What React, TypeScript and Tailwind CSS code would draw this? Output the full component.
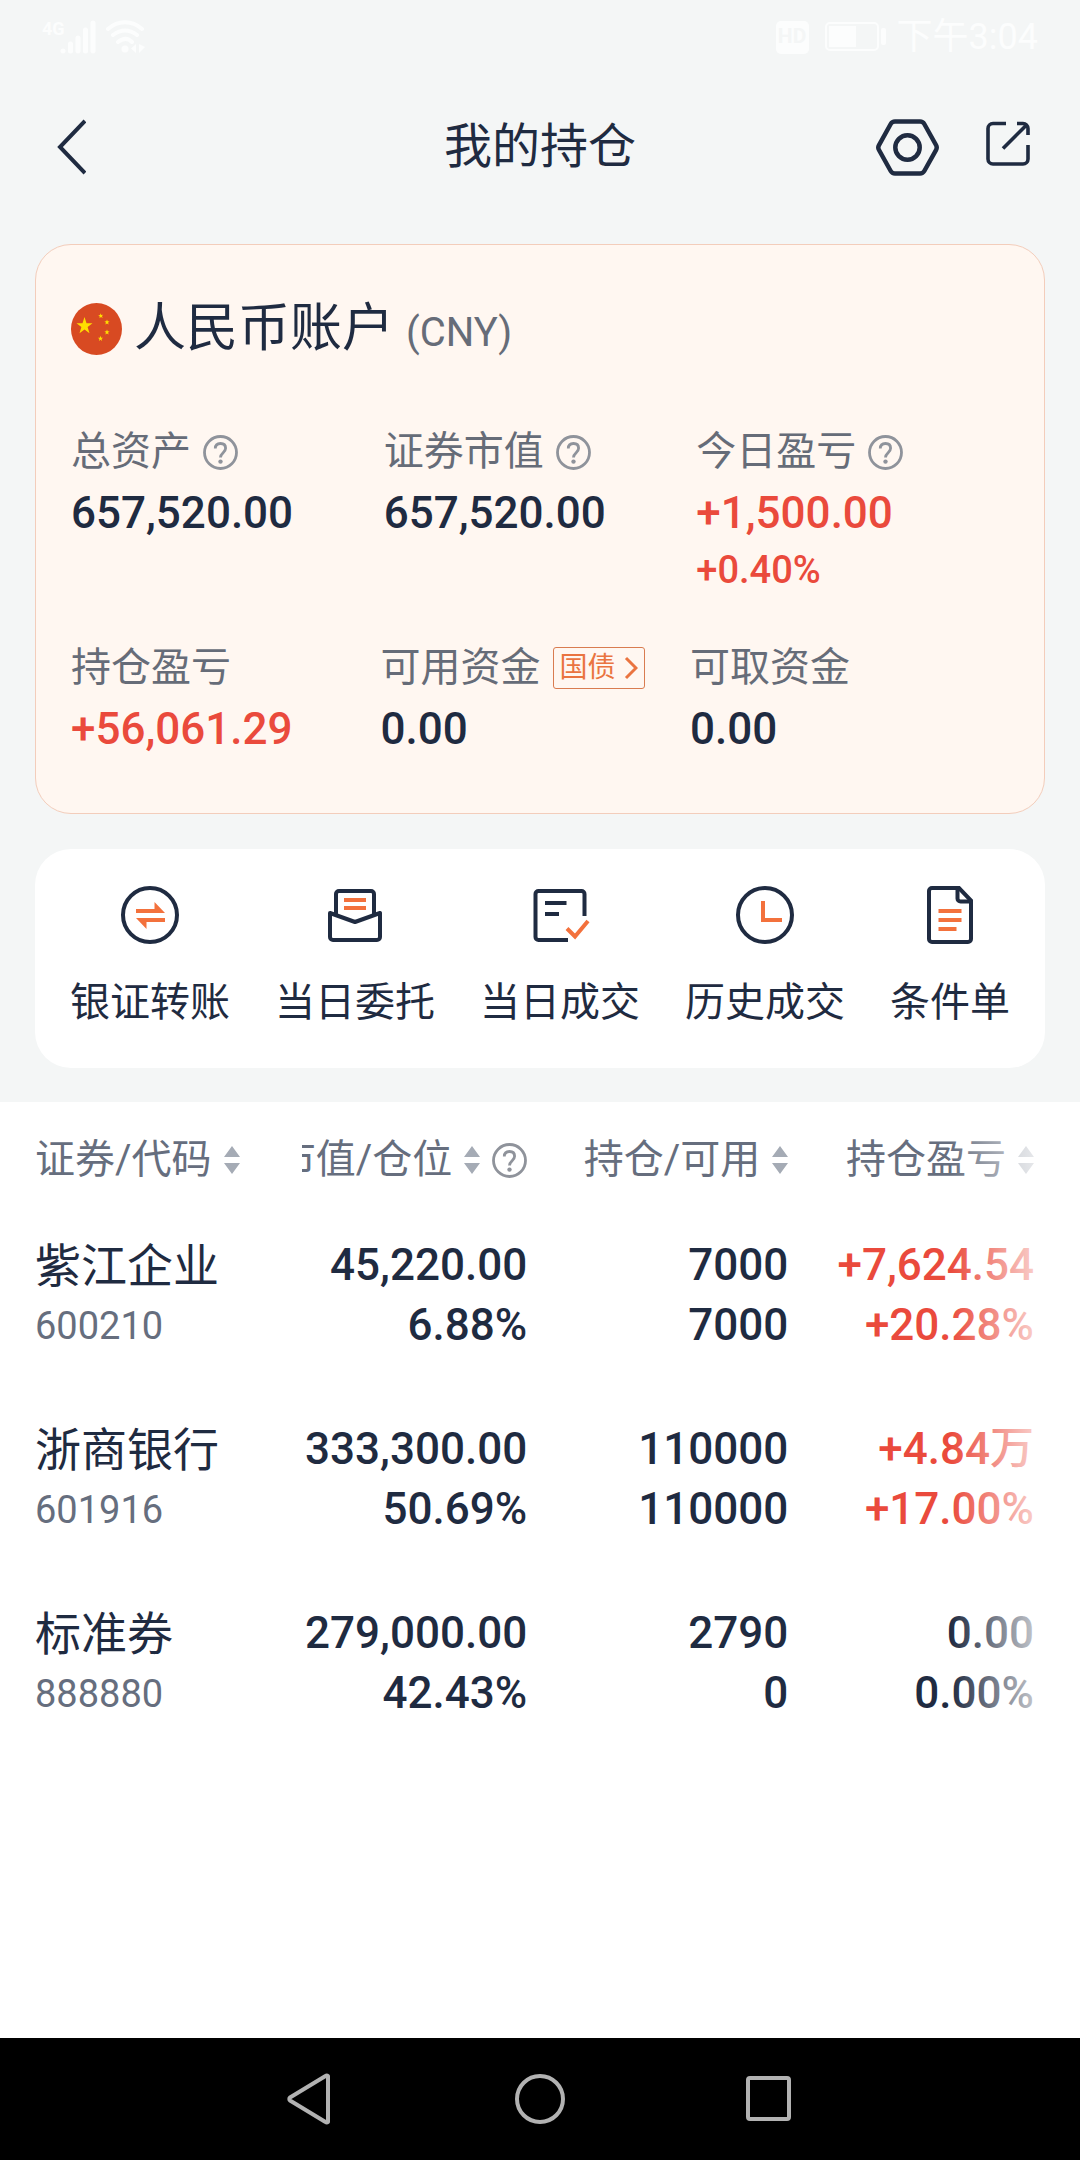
import React from 'react';
import clsx from 'clsx';

interface Holding {
  name: string;
  code: string;
  marketValue: string;
  ratio: string;
  quantity: string;
  available: string;
  profit: string;
  profitRate: string;
}

interface StatProps {
  label: string;
  value: string;
  sub?: string;
  up?: boolean;
  help?: boolean;
  children?: React.ReactNode;
}

const holdings: Holding[] = [
  {
    name: '紫江企业',
    code: '600210',
    marketValue: '45,220.00',
    ratio: '6.88%',
    quantity: '7000',
    available: '7000',
    profit: '+7,624.54',
    profitRate: '+20.28%'
  },
  {
    name: '浙商银行',
    code: '601916',
    marketValue: '333,300.00',
    ratio: '50.69%',
    quantity: '110000',
    available: '110000',
    profit: '+4.84万',
    profitRate: '+17.00%'
  },
  {
    name: '标准券',
    code: '888880',
    marketValue: '279,000.00',
    ratio: '42.43%',
    quantity: '2790',
    available: '0',
    profit: '0.00',
    profitRate: '0.00%'
  }
];

const HelpButton = () => (
  <button type="button" aria-label="说明" className="shrink-0 text-[#8f939b]">
    <svg width="35" height="35" viewBox="0 0 35 35" fill="none" stroke="currentColor" strokeWidth="2.8">
      <circle cx="17.5" cy="17.5" r="16" />
      <path d="M12.3 13.6C12.3 10.4 14.4 8.5 17.5 8.5s5.1 1.8 5.1 4.8c0 4.3-5.1 4.5-5.1 9.2" />
      <circle cx="17.5" cy="26.6" r="2.2" fill="currentColor" stroke="none" />
    </svg>
  </button>
);

const SortIcon = () => (
  <svg width="16" height="28" viewBox="0 0 16 28" className="shrink-0" fill="#a5abb5">
    <path d="M8 0l8 11H0zM8 28L0 17h16z" />
  </svg>
);

const SortHeader = ({ label }: { label: string }) => (
  <button type="button" className="flex shrink-0 items-center gap-3 whitespace-nowrap">
    {label}
    <SortIcon />
  </button>
);

const Stat = ({ label, value, sub, up, help, children }: StatProps) => (
  <div>
    <dt className="flex items-center gap-3 whitespace-nowrap text-[40px] leading-[60px] text-[#666c78]">
      {label}
      {help && <HelpButton />}
      {children}
    </dt>
    <dd className={clsx('font-medium', up ? 'text-[#ea4a3c]' : 'text-[#1f2b41]')}>
      <div className="text-[44px] leading-[62px]">{value}</div>
      {sub && <div className="text-[38px] leading-[52px]">{sub}</div>}
    </dd>
  </div>
);

const FlagIcon = () => (
  <svg width="51" height="52" viewBox="0 0 51 52" className="shrink-0">
    <ellipse cx="25.5" cy="26" rx="25.5" ry="26" fill="#d84a22" />
    <g fill="#ffde00">
      <path d="M13.5 14l2 6.2h6l-4.900 3.800 1.900 6.200-5-3.800-5 3.800 1.900-6.200-4.900-3.800h6z" />
      <path d="M29.500 10.200l.8 1.700 1.900-.2-1.300 1.400.8 1.800-1.700-.9-1.500 1.300.3-1.900-1.600-1 1.900-.4z" />
      <path d="M36 16.400l.7 1.900 1.900.1-1.500 1.200.5 1.900-1.600-1.100-1.600 1.100.5-1.900-1.500-1.200 1.900-.1z" />
      <path d="M36 26.400l.7 1.900 1.900.1-1.500 1.200.5 1.900-1.600-1.100-1.600 1.100.5-1.900-1.500-1.200 1.900-.1z" />
      <path d="M29.500 32.800l.7 1.900 1.900.1-1.500 1.200.5 1.900-1.600-1.100-1.600 1.100.5-1.900-1.500-1.200 1.900-.1z" />
    </g>
  </svg>
);

const IconFrame = ({ children }: { children: React.ReactNode }) => (
  <svg width="58" height="58" viewBox="0 0 58 58" fill="none" stroke="#1f2b41" strokeWidth="4" className="overflow-visible">
    {children}
  </svg>
);

const actions = [
  {
    label: '银证转账',
    icon: (
      <IconFrame>
        <circle cx="29" cy="29" r="27" />
        <path d="M15 23h18.500v-7L44 27H15zM15 32h29v4H25.500v7z" fill="#f3713c" stroke="none" />
      </IconFrame>
    )
  },
  {
    label: '当日委托',
    icon: (
      <IconFrame>
        <path d="M10 28V8a3 3 0 0 1 3-3h32a3 3 0 0 1 3 3v20" />
        <path d="M4 27l25 9 25-9v24a3 3 0 0 1-3 3H7a3 3 0 0 1-3-3z" strokeLinejoin="round" />
        <path d="M18 14h22M18 22h22" stroke="#f3713c" />
      </IconFrame>
    )
  },
  {
    label: '当日成交',
    icon: (
      <IconFrame>
        <path d="M37 54H7.500a3 3 0 0 1-3-3V8a3 3 0 0 1 3-3h43a3 3 0 0 1 3 3v22" />
        <path d="M14 17h21.500M14 28h14" />
        <path d="M36 42.500l8 8L57 35" stroke="#f3713c" />
      </IconFrame>
    )
  },
  {
    label: '历史成交',
    icon: (
      <IconFrame>
        <circle cx="29" cy="29" r="27" />
        <path d="M27 15v19h19" stroke="#f3713c" />
      </IconFrame>
    )
  },
  {
    label: '条件单',
    icon: (
      <IconFrame>
        <path d="M38 2H11a3 3 0 0 0-3 3v48a3 3 0 0 0 3 3h36a3 3 0 0 0 3-3V14.500z" />
        <path d="M36.500 3v9.500a3 3 0 0 0 3 3H50" />
        <path d="M17.500 25h23M17.500 34h23M17.500 43h18" stroke="#f3713c" />
      </IconFrame>
    )
  }
];

const StatusBar = () => (
  <div className="flex h-[74px] items-center justify-between px-[42px] text-[#fcfdfd]">
    <div className="flex items-center gap-[10px]">
      <div className="flex items-end">
        <div className="h-[34px] w-[18px] text-[18px] leading-[18px] font-bold">4G</div>
        <svg width="36" height="34" viewBox="0 0 36 34" stroke="currentColor" strokeWidth="5" strokeLinecap="round">
          <path d="M3 31v0M10.500 31v-7M18 31V18M25.500 31V10M33 31V3" />
        </svg>
      </div>
      <svg width="40" height="34" viewBox="0 0 40 34" fill="none" stroke="currentColor" strokeWidth="4" strokeLinecap="round">
        <path d="M2 9c10-9 24-9 34 0M7 15c8-6 16-6 24 0M12 22c5-4 10-4 14 0" />
        <circle cx="19" cy="29" r="3.500" fill="currentColor" stroke="none" />
        <path d="M30 24v9l-5-4.500zM33 24v9l6-6z" fill="currentColor" stroke="none" />
      </svg>
    </div>
    <div className="flex items-center gap-[10px]">
      <div className="flex h-[33px] w-[33px] items-center justify-center rounded-[5px] bg-[#fcfdfd] text-[21px] font-bold text-[#f4f6f6]">
        HD
      </div>
      <svg width="62" height="30" viewBox="0 0 62 30" className="ml-[6px]">
        <rect x="1" y="1" width="52" height="27" rx="4" fill="none" stroke="currentColor" strokeWidth="2" />
        <rect x="4" y="4" width="27" height="21" fill="currentColor" />
        <rect x="56" y="6" width="5" height="17" rx="2" fill="currentColor" />
      </svg>
      <span className="text-[36px] leading-[40px]">下午3:04</span>
    </div>
  </div>
);

const Header = () => (
  <header className="grid h-[146px] grid-cols-3 items-center px-[50px]">
    <button type="button" aria-label="返回" className="justify-self-start">
      <svg width="36" height="56" viewBox="0 0 36 56" fill="none" stroke="#1f2b41" strokeWidth="4">
        <path d="M35 2L10 28l25 26" />
      </svg>
    </button>
    <h1 className="text-center text-[48px] leading-[60px]">我的持仓</h1>
    <div className="flex items-center gap-[47px] justify-self-end">
      <button type="button" aria-label="设置">
        <svg width="63" height="57" viewBox="0 0 63 57" fill="none" stroke="#1f2b41" strokeWidth="4.500">
          <path d="M19 2.500h25a5 5 0 0 1 4.300 2.500L60 26a5 5 0 0 1 0 5L48.300 52a5 5 0 0 1-4.300 2.500H19a5 5 0 0 1-4.300-2.500L3 31a5 5 0 0 1 0-5L14.700 5A5 5 0 0 1 19 2.500z" />
          <circle cx="31.500" cy="28.500" r="12.200" />
        </svg>
      </button>
      <button type="button" aria-label="分享">
        <svg width="44" height="57" viewBox="0 0 44 57" fill="none" stroke="#1f2b41" strokeWidth="3.600">
          <path d="M20 4.500H7a5 5 0 0 0-5 5V40a5 5 0 0 0 5 5h30a5 5 0 0 0 5-5V26M31 4.500h6a5 5 0 0 1 5 5V16M17 29.500L41 5.500" />
        </svg>
      </button>
    </div>
  </header>
);

const AccountCard = () => (
  <section className="mx-[35px] mt-6 rounded-[36px] border border-[#f3cdbb] bg-[#fff7f1] px-[35px] pt-[54px] pb-[53px]">
    <h2 className="flex items-center text-[52px] leading-[60px]">
      <FlagIcon />
      <span className="ml-3 flex items-baseline gap-3">
        人民币账户
        <span className="text-[40px] leading-[40px] text-[#666c78]">(CNY)</span>
      </span>
    </h2>
    <dl className="mt-[63px] grid grid-cols-3">
      <Stat label="总资产" value="657,520.00" help />
      <Stat label="证券市值" value="657,520.00" help />
      <Stat label="今日盈亏" value="+1,500.00" sub="+0.40%" up help />
    </dl>
    <dl className="mt-[42px] grid grid-cols-[33%_33%_34%]">
      <Stat label="持仓盈亏" value="+56,061.29" up />
      <Stat label="可用资金" value="0.00">
        <button
          type="button"
          className="flex h-[42px] items-center gap-2 rounded-[3px] border border-[#d97c50] px-[6px] text-[28px] leading-[38px] text-[#ea7440]"
        >
          国债
          <svg width="14" height="24" viewBox="0 0 14 24" fill="none" stroke="currentColor" strokeWidth="3">
            <path d="M2 2l10 10L2 22" />
          </svg>
        </button>
      </Stat>
      <Stat label="可取资金" value="0.00" />
    </dl>
  </section>
);

const HoldingTable = () => (
  <div className="relative">
    <table className="w-full table-fixed border-collapse">
      <thead className="text-[40px] text-[#666e7e]">
        <tr className="h-28">
          <th scope="col" className="w-[28%] pt-1 pl-[35px] font-normal">
            <SortHeader label="证券/代码" />
          </th>
          <th scope="col" className="w-[21%] pt-1 pr-[2px] font-normal">
            <div className="flex items-center justify-end gap-3 overflow-hidden">
              <SortHeader label="市值/仓位" />
              <HelpButton />
            </div>
          </th>
          <th scope="col" className="w-[24%] pt-1 font-normal">
            <div className="flex justify-end">
              <SortHeader label="持仓/可用" />
            </div>
          </th>
          <th scope="col" className="w-[27%] pt-1 pr-[46px] font-normal">
            <div className="flex justify-end">
              <SortHeader label="持仓盈亏" />
            </div>
          </th>
        </tr>
      </thead>
      <tbody className="text-right text-[44px] leading-[60px] font-medium">
        {holdings.map(item => (
          <tr key={item.code}>
            <td className="pt-[22px] pb-[42px] pl-[35px] text-left font-normal">
              <div className="text-[46px] leading-[60px]">{item.name}</div>
              <div className="text-[38px] leading-[60px] text-[#666e7e]">{item.code}</div>
            </td>
            <td className="pt-[21px] pr-[2px] pb-[43px]">
              <div>{item.marketValue}</div>
              <div>{item.ratio}</div>
            </td>
            <td className="pt-[21px] pb-[43px]">
              <div>{item.quantity}</div>
              <div>{item.available}</div>
            </td>
            <td className={clsx('pt-[21px] pr-[46px] pb-[43px]', item.profit.startsWith('+') && 'text-[#ea4a3c]')}>
              <div>{item.profit}</div>
              <div>{item.profitRate}</div>
            </td>
          </tr>
        ))}
      </tbody>
    </table>
    <div className="pointer-events-none absolute inset-y-0 right-0 w-[130px] bg-linear-to-r from-white/0 to-white to-90%" />
  </div>
);

const NavBar = () => (
  <nav className="flex h-[122px] items-center justify-center gap-[180px] bg-black">
    <button type="button" aria-label="返回">
      <svg width="50" height="52" viewBox="0 0 50 52" fill="none" stroke="#b2b2b2" strokeWidth="4" strokeLinejoin="round">
        <path d="M43 3v46a2 2 0 0 1-2.500 0L5 27.500a2 2 0 0 1 0-3L40.500 3A2 2 0 0 1 43 3z" />
      </svg>
    </button>
    <button type="button" aria-label="主页">
      <svg width="50" height="50" viewBox="0 0 50 50" fill="none" stroke="#b2b2b2" strokeWidth="4">
        <circle cx="25" cy="25" r="23" />
      </svg>
    </button>
    <button type="button" aria-label="最近任务">
      <svg width="50" height="50" viewBox="0 0 50 50" fill="none" stroke="#b2b2b2" strokeWidth="4">
        <rect x="3" y="4" width="41" height="41" rx="2" />
      </svg>
    </button>
  </nav>
);

export default function App() {
  return (
    <div className="flex min-h-screen flex-col bg-[#f4f6f6] font-[Roboto,'Noto_Sans_CJK_SC',sans-serif] text-[#1f2b41]">
      <StatusBar />
      <Header />
      <AccountCard />

      <section className="mx-[35px] mt-[35px] mb-[34px] flex justify-between rounded-[36px] bg-white px-[35px] pt-[37px] pb-[35px]">
        {actions.map(action => (
          <button key={action.label} type="button" className="flex flex-col items-center gap-[29px]">
            {action.icon}
            <span className="text-[40px] leading-[60px] whitespace-nowrap">{action.label}</span>
          </button>
        ))}
      </section>

      <main className="flex-1 bg-white">
        <HoldingTable />
      </main>

      <NavBar />
    </div>
  );
}
